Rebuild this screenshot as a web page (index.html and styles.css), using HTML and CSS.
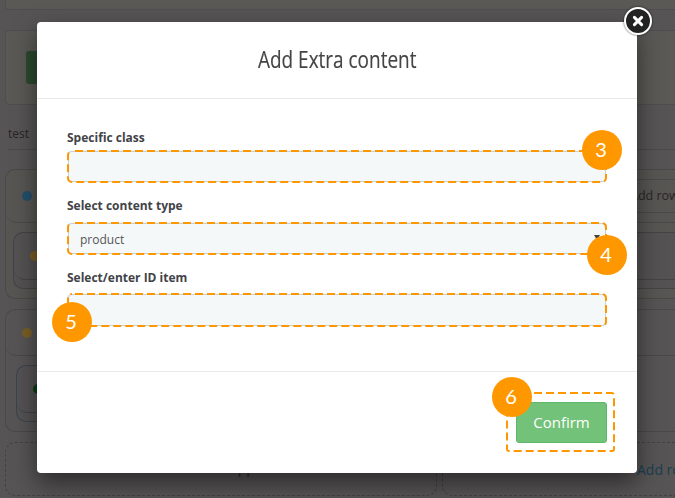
FILE: index.html
```html
<!DOCTYPE html>
<html lang="en">
<head>
<meta charset="utf-8">
<title>Add Extra content</title>
<link rel="stylesheet" href="styles.css">
</head>
<body>
<div class="page">
  <div class="panel panel-top"></div>
  <div class="panel panel-tools"><span class="tool-button"></span></div>
  <div class="tabs">test</div>
  <div class="group group-first">
    <div class="group-head"><i class="dot blue"></i><span class="row-button">Add row</span></div>
    <div class="nested"><div class="nested-head"><i class="dot yellow"></i></div></div>
  </div>
  <div class="group group-second">
    <div class="group-head"><i class="dot yellow"></i></div>
    <div class="nested outlined"><div class="nested-head"><i class="dot green"></i></div></div>
  </div>
  <div class="adders">
    <div class="adder wrapper-adder">Add wrapper</div>
    <div class="adder row-adder">Add row</div>
  </div>
</div>

<div class="modal">
  <header class="modal-head"><h1><span>Add Extra content</span></h1></header>
  <div class="modal-body">
    <div class="field">
      <label>Specific class</label>
      <div class="control h33">
        <svg class="frame" width="540" height="33"><rect x="1" y="1" width="538" height="31" rx="4" stroke-dashoffset="-3"/></svg>
        <b class="badge b3">3</b>
      </div>
    </div>
    <div class="field">
      <label>Select content type</label>
      <div class="control h33"><span class="value">product</span><i class="caret"></i>
        <svg class="frame" width="540" height="33"><rect x="1" y="1" width="538" height="31" rx="4" stroke-dashoffset="-3"/></svg>
        <b class="badge b4">4</b>
      </div>
    </div>
    <div class="field">
      <label>Select/enter ID item</label>
      <div class="control h34">
        <svg class="frame" width="540" height="34"><rect x="1" y="1" width="538" height="32" rx="4" stroke-dashoffset="-3"/></svg>
        <b class="badge b5">5</b>
      </div>
    </div>
  </div>
  <footer class="modal-foot">
    <div class="confirm">
      <button>Confirm</button>
      <svg class="frame" width="109" height="60"><rect x="1" y="1" width="107" height="58" rx="2" stroke-dashoffset="-1"/></svg>
      <b class="badge b6">6</b>
    </div>
  </footer>
  <svg class="close" width="32" height="32" viewBox="0 0 32 32">
    <circle cx="16" cy="16" r="13" fill="#222" stroke="#fff" stroke-width="2"/>
    <path d="M12.4 12.4l7.2 7.2M19.6 12.4l-7.2 7.2" stroke="#fff" stroke-width="3" stroke-linecap="round"/>
  </svg>
</div>
</body>
</html>
```
FILE: styles.css
```css
* { box-sizing: border-box; }
html { overflow: hidden; }
body {
  margin: 0;
  width: 675px;
  height: 498px;
  overflow: hidden;
  position: relative;
  background: #575455;
  font-family: "Open Sans", "Noto Sans", sans-serif;
  font-size: 12px;
  color: #272526;
}
.page { padding-left: 5px; width: 675px; height: 498px; overflow: hidden; }
.panel { background: #5a5955; border: 1px solid #504d4e; border-right: 0; border-radius: 5px 0 0 5px; }
.panel-top { height: 10px; border-top: 0; border-radius: 0 0 0 5px; }
.panel-tools { height: 75px; margin-top: 20px; padding: 20px; }
.tool-button { display: block; width: 100px; height: 33px; border-radius: 3px; background: #2c4a2d; }
.tabs { height: 45px; margin: 0 0 19px 3px; padding-top: 20px; line-height: 18px; border-bottom: 1px solid #4c494a; }
.group { border: 1px solid #4a4849; border-right: 0; border-radius: 10px 0 0 10px; }
.group-first { height: 130px; background: #585653; }
.group-second { height: 123px; margin-top: 10px; }
.group-head {
  display: flex;
  align-items: center;
  height: 53px;
  padding-left: 16px;
  border-bottom: 1px solid #4a4849;
  border-radius: 10px 0 0 10px;
}
.group-second .group-head { height: 46px; }
.dot { width: 10px; height: 10px; border-radius: 50%; flex: none; }
.blue { background: #23506a; }
.yellow { background: #7a5f26; }
.green { background: #0b3d13; }
.row-button {
  flex: 1;
  margin-left: 580px;
  height: 34px;
  padding-left: 17px;
  line-height: 31px;
  font-size: 12.5px;
  white-space: nowrap;
  border: 1px solid #4a4849;
  border-right: 0;
}
.nested {
  height: 57px;
  margin: 9px 0 0 7px;
  border: 1px solid #454344;
  border-right: 0;
  border-radius: 10px 0 0 10px;
  background: #555253;
}
.nested-head {
  display: flex;
  align-items: center;
  height: 47px;
  padding-left: 16px;
  border-bottom: 1px solid #454344;
  border-radius: 10px 0 0 10px;
}
.nested.outlined, .outlined .nested-head { border-color: #3a444d; }
.nested.outlined { width: 500px; margin-left: 10px; }
.adders { display: flex; gap: 5px; margin-top: 10px; }
.adder {
  flex: none;
  height: 54px;
  border: 1px dashed #434142;
  border-radius: 10px;
  font-size: 14px;
  line-height: 53px;
  color: #193f50;
}
.wrapper-adder { width: 432px; text-align: center; padding-left: 10px; line-height: 50px; color: #202d35; }
.row-adder { width: 233px; padding-left: 194px; border-right: 0; border-radius: 10px 0 0 10px; white-space: nowrap; overflow: hidden; }

.modal {
  position: absolute;
  left: 37px;
  top: 22px;
  width: 600px;
  height: 451px;
  display: flex;
  flex-direction: column;
  background: #fff;
  border-radius: 4px;
  box-shadow: 0 10px 25px rgba(0, 0, 0, .5);
  color: #414552;
}
.modal-head { height: 77px; border-bottom: 1px solid #eaeaea; display: flex; justify-content: center; }
h1 { margin: 0; width: 158px; font: 400 24px/74px "Open Sans", sans-serif; color: #444; white-space: nowrap; -webkit-text-stroke: .15px #444; }
h1 span { display: inline-block; transform: scaleX(.79); transform-origin: left; }
.modal-body { height: 272px; padding: 30px 30px 0; }
.field { display: flex; flex-direction: column; }
.field + .field { margin-top: 14px; }
.field + .field + .field { margin-top: 13px; }
label { height: 21px; line-height: 18px; font-weight: 700; color: #424347; }
.field + .field label { height: 25px; }
.field + .field + .field label { padding-top: 1px; }
.control {
  position: relative;
  padding-left: 13px;
  line-height: 35px;
  background: #f4f8f9;
  box-shadow: inset 0 0 0 1px #fff, inset 0 0 0 2px #c5d2d8;
  border-radius: 5px;
  color: #555;
}
.value { display: inline-block; }
.h33 { height: 33px; }
.h34 { height: 34px; }
.frame { position: absolute; left: 0; top: 0; fill: none; stroke: #ff9800; stroke-width: 2; stroke-dasharray: 8 4; }
.caret { position: absolute; right: 7px; top: 13px; border: 3px solid transparent; border-top: 5px solid #444; border-bottom: 0; }
.badge {
  position: absolute;
  width: 40px;
  height: 40px;
  padding-right: 2px;
  border-radius: 50%;
  background: #ff9800;
  color: #fff;
  text-align: center;
  font: 400 20px/39px Lato, sans-serif;
}
.b3 { left: 515px; top: -20px; }
.b4 { left: 520px; top: 13px; }
.b5 { left: -15px; top: 9px; }
.b6 { left: -14px; top: -15px; }
.modal-foot { height: 102px; border-top: 1px solid #eaeaea; padding: 20px 22px 0 0; display: flex; justify-content: flex-end; }
.confirm { position: relative; width: 109px; height: 60px; padding: 10px 8px 0 10px; }
button {
  display: block;
  width: 91px;
  height: 41px;
  padding: 0 0 1px;
  border: 1px solid #5fb768;
  border-radius: 3px;
  background: #72c279;
  color: #fff;
  font: 15px/38px "Open Sans", sans-serif;
}
.close { position: absolute; right: -17px; top: -17px; fill: none; filter: drop-shadow(0 0 1px rgba(0, 0, 0, .7)); }
```
